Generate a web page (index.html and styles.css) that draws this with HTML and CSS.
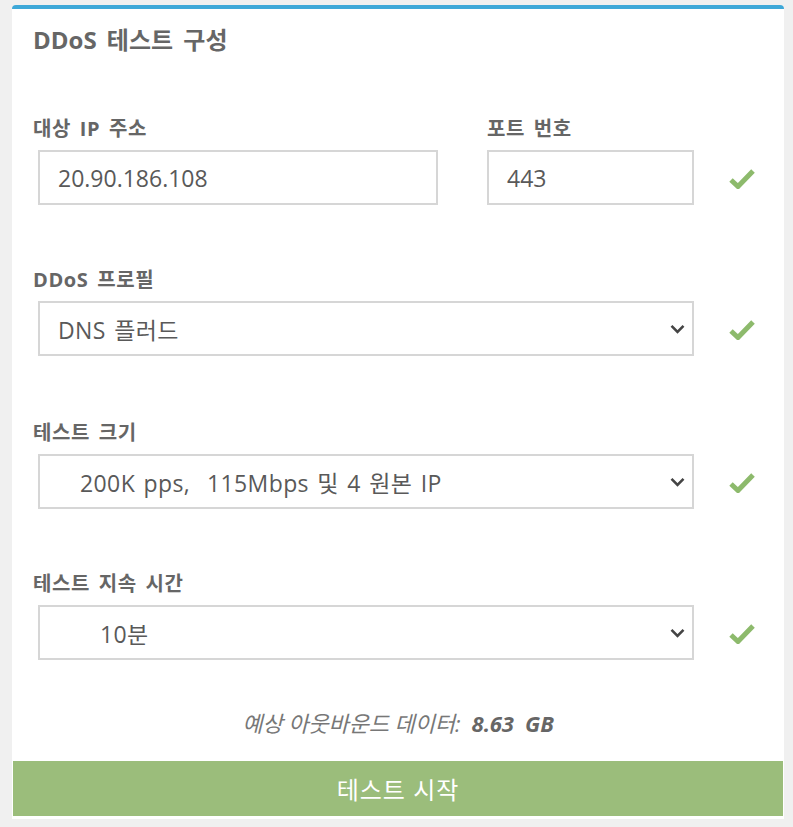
FILE: index.html
```html
<!DOCTYPE html>
<html lang="ko">
<head>
<meta charset="utf-8">
<link rel="stylesheet" href="styles.css">
</head>
<body>
<div class="card">
  <h1 class="title">DDoS 테스트 구성</h1>

  <div class="group group-first">
    <div class="row">
      <div class="field field-ip">
        <label class="label">대상 IP 주소</label>
        <div class="input">20.90.186.108</div>
      </div>
      <div class="field field-port">
        <label class="label">포트 번호</label>
        <div class="input">443</div>
      </div>
      <svg class="check" viewBox="0 0 26 22"><path d="M2 13 L9 19.5 L24 4" fill="none" stroke="#8dba6c" stroke-width="5"/></svg>
    </div>
  </div>

  <div class="group">
    <label class="label">DDoS 프로필</label>
    <div class="row">
      <div class="select"><span class="val">DNS 플러드</span><svg class="chev" viewBox="0 0 15 10"><path d="M1.5 1.8 L7.5 7.8 L13.5 1.8" fill="none" stroke="#444" stroke-width="2.6"/></svg></div>
      <svg class="check" viewBox="0 0 26 22"><path d="M2 13 L9 19.5 L24 4" fill="none" stroke="#8dba6c" stroke-width="5"/></svg>
    </div>
  </div>

  <div class="group group-3">
    <label class="label">테스트 크기</label>
    <div class="row">
      <div class="select"><span class="val val-2">200K pps,&nbsp; 115Mbps 및 4 원본 IP</span><svg class="chev" viewBox="0 0 15 10"><path d="M1.5 1.8 L7.5 7.8 L13.5 1.8" fill="none" stroke="#444" stroke-width="2.6"/></svg></div>
      <svg class="check" viewBox="0 0 26 22"><path d="M2 13 L9 19.5 L24 4" fill="none" stroke="#8dba6c" stroke-width="5"/></svg>
    </div>
  </div>

  <div class="group">
    <label class="label">테스트 지속 시간</label>
    <div class="row">
      <div class="select"><span class="val val-3">10분</span><svg class="chev" viewBox="0 0 15 10"><path d="M1.5 1.8 L7.5 7.8 L13.5 1.8" fill="none" stroke="#444" stroke-width="2.6"/></svg></div>
      <svg class="check" viewBox="0 0 26 22"><path d="M2 13 L9 19.5 L24 4" fill="none" stroke="#8dba6c" stroke-width="5"/></svg>
    </div>
  </div>

  <p class="estimate">예상 아웃바운드 데이터:&nbsp; <b>8.63&nbsp; GB</b></p>

  <button class="start">테스트 시작</button>
</div>
</body>
</html>
```
FILE: styles.css
```css
html, body {
  margin: 0;
  padding: 0;
  background: #f0f0f0;
}
body {
  padding-top: 5px;
  font-family: "Open Sans", "Noto Sans CJK KR", sans-serif;
  color: #666;
}
.card {
  margin-left: 12px;
  width: 772px;
  background: #fff;
  border-top: 4px solid #3ea8d8;
  border-radius: 4px 4px 0 0;
  padding: 0 0 3px 0;
  box-sizing: border-box;
}
.title {
  margin: 0;
  padding: 16px 0 0 21px;
  font-size: 24px;
  line-height: 30px;
  font-weight: 700;
  color: #666;
  word-spacing: 4px;
}
.group {
  margin-top: 63px;
  padding-left: 21px;
}
.group-first {
  margin-top: 62px;
}
.group-3 {
  margin-top: 65px;
}
.row {
  display: flex;
  align-items: flex-end;
}
.field {
  display: flex;
  flex-direction: column;
}
.label {
  display: block;
  font-size: 20px;
  line-height: 24px;
  font-weight: 700;
  color: #666;
  margin-bottom: 9px;
  letter-spacing: 0.6px;
  word-spacing: 3px;
}
.field-ip .input {
  margin-left: 5px;
  width: 400px;
}
.field-port {
  margin-left: 49px;
}
.field-port .input {
  width: 207px;
}
.input, .select {
  height: 55px;
  box-sizing: border-box;
  border: 2px solid #d6d6d6;
  font-size: 23px;
  color: #595959;
  display: flex;
  align-items: center;
  padding-left: 18px;
  background: #fff;
}
.select {
  width: 656px;
  margin-left: 5px;
  justify-content: space-between;
  padding-right: 5px;
}
.val {
  letter-spacing: 0.4px;
  word-spacing: 2px;
}
.val-2 { padding-left: 22px; }
.val-3 { padding-left: 42px; }
.chev {
  width: 15px;
  height: 10px;
  margin-right: 2px;
}
.check {
  width: 26px;
  height: 22px;
  margin-left: 35px;
  margin-bottom: 16px;
}
.estimate {
  margin: 48px 0 0 0;
  text-align: center;
  font-size: 22px;
  line-height: 30px;
  font-style: italic;
  color: #777;
  letter-spacing: -0.1px;
}
.estimate b {
  color: #666;
  font-weight: 700;
}
.start {
  display: block;
  margin: 23px 1px 0 1px;
  width: 770px;
  height: 55px;
  border: none;
  background: #9bbd7b;
  color: #fff;
  font-family: "Open Sans", "Noto Sans CJK KR", sans-serif;
  font-size: 24px;
  letter-spacing: 1px;
  cursor: pointer;
}
```
